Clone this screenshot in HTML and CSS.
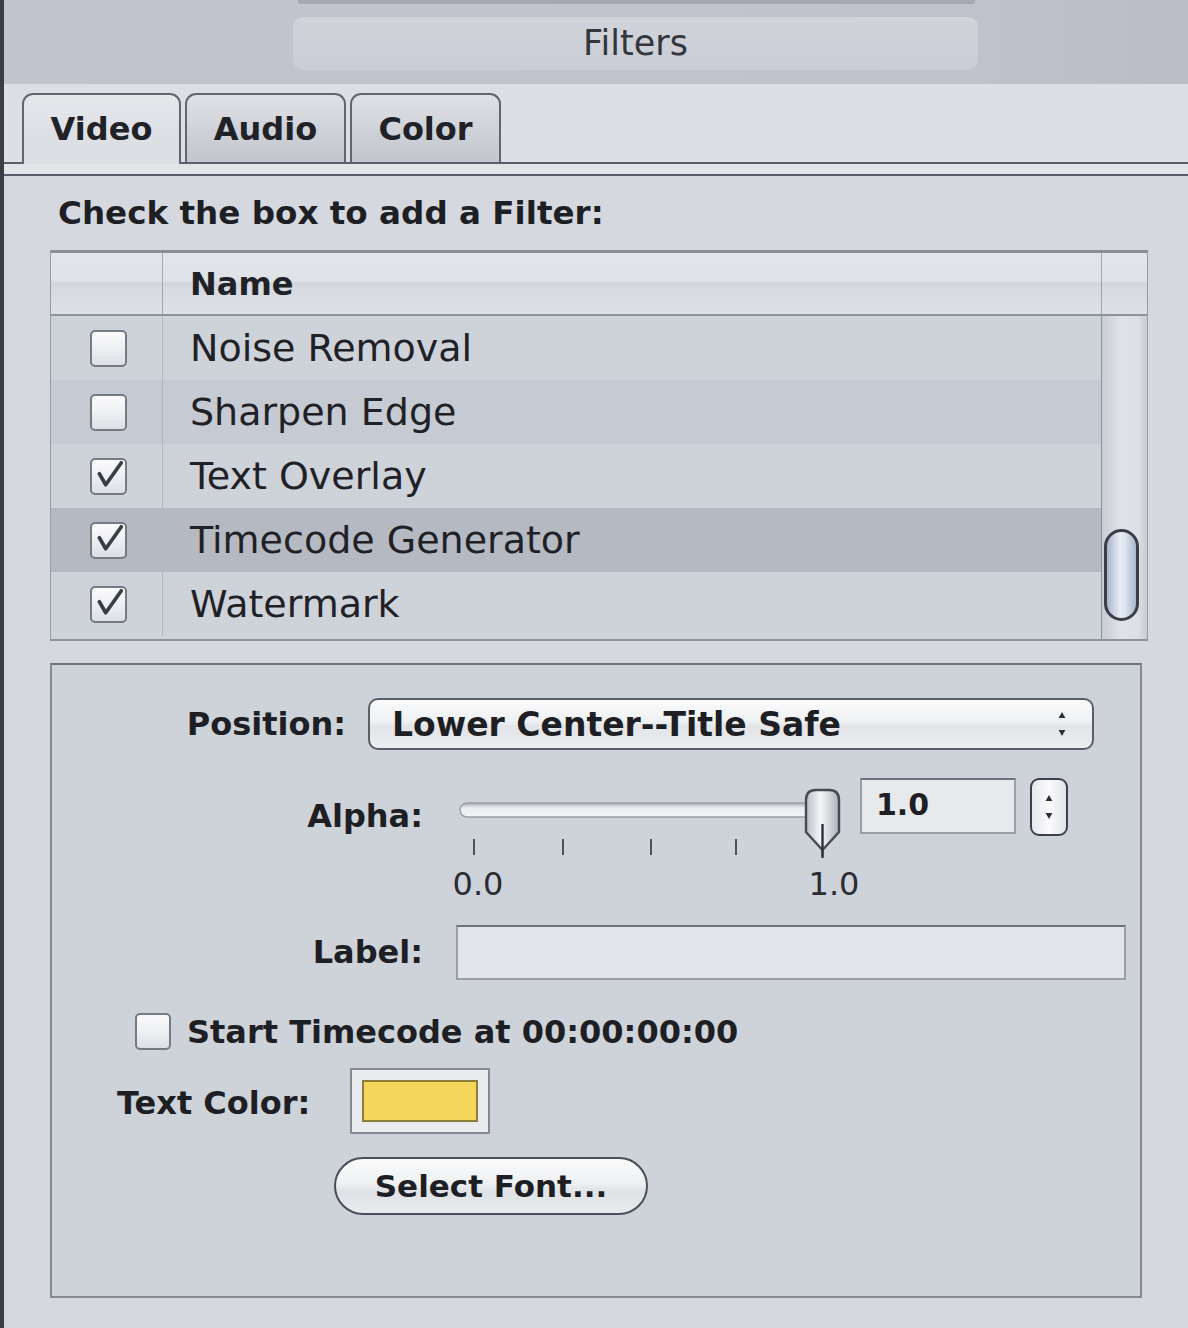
FILE: index.html
```html
<!DOCTYPE html>
<html>
<head>
<meta charset="utf-8">
<link rel="stylesheet" href="styles.css">
</head>
<body>
<div class="window">
  <div class="top">
    <div class="rim"></div>
    <div class="pill">Filters</div>
  </div>
  <div class="tabbar">
    <div class="tabrow">
      <div class="tab tab-video active">Video</div>
      <div class="tab tab-audio">Audio</div>
      <div class="tab tab-color">Color</div>
    </div>
    <div class="tabgap"></div>
  </div>
  <div class="content">
    <div class="hint">Check the box to add a Filter:</div>
    <div class="table">
      <div class="thead">
        <div class="th th-check"></div>
        <div class="th th-name">Name</div>
        <div class="th th-scroll"></div>
      </div>
      <div class="tbody">
        <div class="rows">
          <div class="row row-a">
            <div class="cell-check"><span class="cb"></span></div>
            <div class="cell-name">Noise Removal</div>
          </div>
          <div class="row row-b">
            <div class="cell-check"><span class="cb"></span></div>
            <div class="cell-name">Sharpen Edge</div>
          </div>
          <div class="row row-a">
            <div class="cell-check"><span class="cb"><svg class="tick" viewBox="0 0 36 36"><path d="M8 15 L15 27 L32 3"/></svg></span></div>
            <div class="cell-name">Text Overlay</div>
          </div>
          <div class="row row-sel">
            <div class="cell-check"><span class="cb"><svg class="tick" viewBox="0 0 36 36"><path d="M8 15 L15 27 L32 3"/></svg></span></div>
            <div class="cell-name">Timecode Generator</div>
          </div>
          <div class="row row-a row-last">
            <div class="cell-check"><span class="cb"><svg class="tick" viewBox="0 0 36 36"><path d="M8 15 L15 27 L32 3"/></svg></span></div>
            <div class="cell-name">Watermark</div>
          </div>
        </div>
        <div class="track"><div class="thumb"></div></div>
      </div>
    </div>

    <div class="settings">
      <div class="srow r-pos">
        <div class="lbl lbl-pos">Position:</div>
        <div class="popup">
          <span class="popup-text">Lower Center--Title Safe</span>
          <svg class="arrows" viewBox="0 0 14 34" width="12" height="30"><path d="M7 3 L11 10 H3 Z"/><path d="M7 31 L11 24 H3 Z"/></svg>
        </div>
      </div>
      <div class="srow r-alpha">
        <div class="lbl lbl-wide lbl-alpha">Alpha:</div>
        <svg class="slider" width="400" height="122" viewBox="0 0 400 122">
          <defs>
            <linearGradient id="knob" x1="0" y1="0" x2="1" y2="0">
              <stop offset="0" stop-color="#b9bec7"/>
              <stop offset="0.45" stop-color="#f6f7f9"/>
              <stop offset="1" stop-color="#aab0ba"/>
            </linearGradient>
            <linearGradient id="groove" x1="0" y1="0" x2="0" y2="1">
              <stop offset="0" stop-color="#a9adb5"/>
              <stop offset="0.35" stop-color="#e9ebef"/>
              <stop offset="1" stop-color="#f4f5f7"/>
            </linearGradient>
          </defs>
          <rect x="4" y="25" width="372" height="14" rx="7" fill="url(#groove)" stroke="#9a9ea6" stroke-width="1.5"/>
          <g stroke="#4d5159" stroke-width="2">
            <line x1="18" y1="61" x2="18" y2="77"/>
            <line x1="107" y1="61" x2="107" y2="77"/>
            <line x1="195" y1="61" x2="195" y2="77"/>
            <line x1="280" y1="61" x2="280" y2="77"/>
            <line x1="366.5" y1="52" x2="366.5" y2="78"/>
          </g>
          <path d="M350 22 Q350 12 360 12 H373 Q383 12 383 22 V54 L366.5 72 L350 54 Z" fill="url(#knob)" stroke="#464a52" stroke-width="2.4"/>
          <line x1="366.5" y1="46" x2="366.5" y2="80" stroke="#2f3238" stroke-width="2.4"/>
          <text x="22" y="117" class="scale">0.0</text>
          <text x="378" y="117" class="scale">1.0</text>
        </svg>
        <div class="numfield">1.0</div>
        <div class="stepper">
          <svg viewBox="0 0 14 34" width="12" height="30"><path d="M7 3 L11 10 H3 Z"/><path d="M7 31 L11 24 H3 Z"/></svg>
        </div>
      </div>
      <div class="srow r-label">
        <div class="lbl lbl-wide">Label:</div>
        <div class="textfield"></div>
      </div>
      <div class="srow r-start">
        <span class="cb cb-small"></span>
        <span class="start-text">Start Timecode at 00:00:00:00</span>
      </div>
      <div class="srow r-color">
        <div class="lbl-color">Text Color:</div>
        <div class="well"><div class="swatch"></div></div>
      </div>
      <div class="srow r-btn">
        <div class="button">Select Font...</div>
      </div>
    </div>
  </div>
</div>
</body>
</html>
```

FILE: styles.css
```css
* { box-sizing: border-box; }

html, body {
  margin: 0;
  padding: 0;
}

body {
  width: 1188px;
  height: 1328px;
  overflow: hidden;
  background: #d5d8de;
  font-family: "DejaVu Sans", "Liberation Sans", sans-serif;
  color: #1d1f24;
}

.window {
  height: 1328px;
  border-left: 4px solid #3a3d45;
  display: flex;
  flex-direction: column;
}

/* ---------- top segmented area ---------- */
.top {
  height: 84px;
  background: linear-gradient(to right, #c2c5cd 0%, #c0c3cb 80%, #babdc6 100%);
  padding-left: 289px;
}

.rim {
  margin-left: 5px;
  width: 677px;
  height: 4px;
  background: #a6a9b1;
  border-radius: 0 0 3px 3px;
}

.pill {
  margin-top: 13px;
  width: 685px;
  height: 53px;
  border-radius: 10px;
  background: linear-gradient(#d0d3da, #cacdd5);
  text-align: center;
  line-height: 53px;
  font-size: 35px;
  color: #34363c;
}

/* ---------- tabs ---------- */
.tabbar {
  height: 92px;
  background: #dcdfe4;
  border-bottom: 2px solid #575c66;
}

.tabrow {
  height: 80px;
  padding-top: 9px;
  padding-left: 18px;
  display: flex;
  align-items: flex-end;
  gap: 4px;
  border-bottom: 2px solid #5a5f69;
}

.tab {
  height: 69px;
  border: 2px solid #61666f;
  border-bottom: none;
  border-radius: 11px 11px 0 0;
  background: linear-gradient(#dfe1e6, #cdd0d6 60%, #c3c6cd);
  display: flex;
  align-items: center;
  justify-content: center;
  font-weight: bold;
  font-size: 32px;
  color: #202227;
}

.tab-video { width: 159px; }
.tab-audio { width: 161px; }
.tab-color { width: 151px; }

.tab.active {
  height: 71px;
  margin-bottom: -2px;
  position: relative;
  z-index: 1;
  background: linear-gradient(#e6e8ec, #dcdfe4 60%, #dcdfe4);
  padding-bottom: 2px;
}

.tabgap {
  height: 10px;
  background: #e2e4e8;
}

/* ---------- content ---------- */
.content {
  flex: 1;
  padding-left: 46px;
  background: #d5d8de;
}

.hint {
  margin-top: 19px;
  padding-left: 8px;
  line-height: 36px;
  font-weight: bold;
  font-size: 32.6px;
  color: #1d1f24;
}

/* ---------- table ---------- */
.table {
  margin-top: 19px;
  width: 1098px;
  border-top: 3px solid #8b8f98;
  border-left: 1px solid #979ba3;
  border-right: 1px solid #979ba3;
  border-bottom: 2px solid #8f939b;
  display: flex;
  flex-direction: column;
}

.thead {
  height: 63px;
  display: flex;
  background: linear-gradient(#e2e5ea 0%, #dfe2e7 45%, #d2d5db 50%, #d6d9df 56%, #dde0e5 100%);
  border-bottom: 2px solid #8e929b;
}

.th-check {
  width: 112px;
  border-right: 1px solid #a2a6ae;
}

.th-name {
  flex: 1;
  padding-left: 27px;
  line-height: 63px;
  font-weight: bold;
  font-size: 32px;
  color: #202228;
}

.th-scroll {
  width: 46px;
  border-left: 1px solid #a2a6ae;
}

.tbody {
  display: flex;
  height: 323px;
}

.rows {
  flex: 1;
  display: flex;
  flex-direction: column;
}

.row {
  height: 64px;
  display: flex;
}

.row-last {
  height: 67px;
  padding-bottom: 3px;
}

.row-a { background: #ced2d9; }
.row-b { background: #c6cbd3; }
.row-sel { background: #b5b9c1; }

.cell-check {
  width: 112px;
  border-right: 1px solid #b3b7bf;
  display: flex;
  align-items: center;
  justify-content: center;
  padding-left: 4px;
}

.cell-name {
  flex: 1;
  padding-left: 27px;
  line-height: 64px;
  font-size: 38px;
  color: #1f2126;
}

.cb {
  width: 37px;
  height: 37px;
  border: 2px solid #767a82;
  border-radius: 5px;
  background: linear-gradient(#fbfbfc, #eceef1 55%, #dcdfe4);
  display: flex;
  align-items: center;
  justify-content: center;
}

.tick {
  width: 33px;
  height: 33px;
  overflow: visible;
}

.tick path {
  fill: none;
  stroke: #3a3d44;
  stroke-width: 4;
  stroke-linecap: round;
  stroke-linejoin: round;
}

.track {
  width: 46px;
  border-left: 1px solid #8e929a;
  background: linear-gradient(to right, #c8ccd3, #dfe2e7 40%, #dcdfe4 80%, #c9cdd4);
  padding-top: 213px;
  padding-left: 2px;
}

.thumb {
  width: 35px;
  height: 92px;
  border: 3px solid #3b3e46;
  border-radius: 18px;
  background: linear-gradient(to right, #a9b5c9, #e8edf5 45%, #dfe6f0 60%, #aab6ca);
}

/* ---------- settings box ---------- */
.settings {
  margin-top: 22px;
  width: 1092px;
  height: 635px;
  border: 2px solid #858992;
  border-top-color: #6f737c;
  background: #ced2d9;
  padding-top: 33px;
  display: flex;
  flex-direction: column;
}

.srow {
  display: flex;
}

.lbl {
  font-weight: bold;
  font-size: 32px;
  text-align: right;
  color: #1d1f24;
}

.r-pos { height: 52px; }

.lbl-pos {
  width: 294px;
  line-height: 52px;
}

.popup {
  margin-left: 22px;
  width: 726px;
  height: 52px;
  border: 2px solid #5a5e67;
  border-radius: 10px;
  background: linear-gradient(#fbfbfc, #eef0f2 45%, #e2e4e8 55%, #eceef1);
  display: flex;
  align-items: center;
  justify-content: space-between;
  padding: 0 24px 0 22px;
}

.popup-text {
  font-weight: bold;
  font-size: 33px;
  color: #1d1f24;
}

.arrows path,
.stepper path {
  fill: #2c2f35;
}

.r-alpha {
  margin-top: 28px;
  align-items: flex-start;
}

.lbl-wide {
  width: 371px;
}

.lbl-alpha {
  line-height: 76px;
}

.slider {
  margin-left: 33px;
  overflow: visible;
}

.scale {
  font-family: "DejaVu Sans", sans-serif;
  font-size: 32px;
  fill: #2a2c31;
  text-anchor: middle;
}

.numfield {
  margin-left: 4px;
  width: 156px;
  height: 56px;
  border: 2px solid #9a9ea6;
  border-top-color: #6d717a;
  background: #e7e9ed;
  padding-left: 14px;
  line-height: 50px;
  font-weight: bold;
  font-size: 30px;
  color: #1d1f24;
}

.stepper {
  margin-left: 14px;
  width: 38px;
  height: 58px;
  border: 2px solid #3d4048;
  border-radius: 9px;
  background: linear-gradient(to right, #e5e7eb, #fbfbfc 50%, #e1e3e8);
  display: flex;
  align-items: center;
  justify-content: center;
}

.r-label {
  margin-top: 25px;
  height: 55px;
}

.r-label .lbl {
  line-height: 55px;
}

.textfield {
  margin-left: 33px;
  width: 670px;
  height: 55px;
  border: 2px solid #9a9ea6;
  border-top-color: #6d717a;
  background: #e3e5ea;
}

.r-start {
  margin-top: 33px;
  padding-left: 83px;
  align-items: center;
  height: 37px;
}

.cb-small {
  width: 36px;
  height: 37px;
}

.start-text {
  margin-left: 16px;
  font-weight: bold;
  font-size: 32px;
  color: #1d1f24;
}

.r-color {
  margin-top: 18px;
  padding-left: 65px;
  height: 66px;
}

.lbl-color {
  width: 233px;
  line-height: 70px;
  font-weight: bold;
  font-size: 32px;
  color: #1d1f24;
}

.well {
  width: 140px;
  height: 66px;
  border: 2px solid #868a93;
  background: #e9ebee;
  padding: 10px;
}

.swatch {
  width: 100%;
  height: 100%;
  border: 2px solid #8d7e3a;
  background: #f4d75c;
}

.r-btn {
  margin-top: 23px;
  padding-left: 282px;
}

.button {
  width: 314px;
  height: 58px;
  border: 2px solid #4a4e56;
  border-radius: 29px;
  background: linear-gradient(#fbfbfc, #eef0f2 45%, #dfe2e6 60%, #e9ebee);
  text-align: center;
  line-height: 54px;
  font-weight: bold;
  font-size: 31px;
  color: #1d1f24;
}
```
